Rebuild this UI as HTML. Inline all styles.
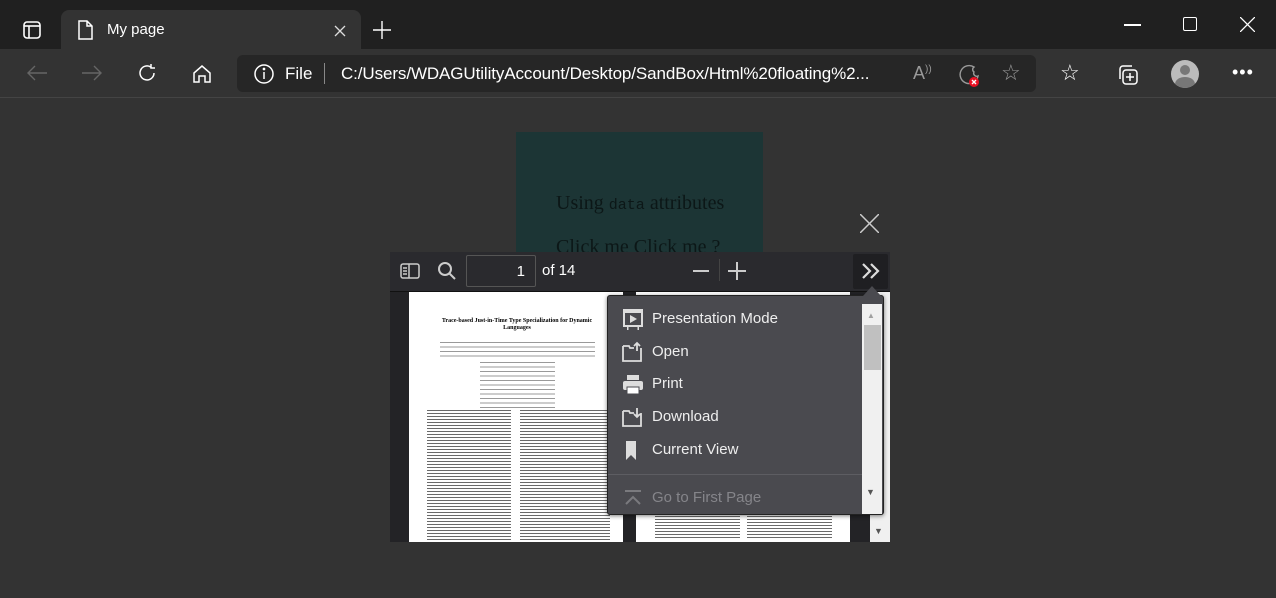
<!DOCTYPE html>
<html><head><style>
*{margin:0;padding:0;box-sizing:border-box}
body{width:1276px;height:598px;background:#333;font-family:"Liberation Sans",sans-serif;position:relative;overflow:hidden}
.abs{position:absolute}
.lines{background:repeating-linear-gradient(to bottom,#6a6a6a 0 1px,#fff 1px 3px)}
.lines2{background:repeating-linear-gradient(to bottom,#999 0 1px,#fff 1px 4.5px)}
</style></head><body>
<div class="abs" style="left:0;top:0;width:1276px;height:49px;background:#202020"></div>
<div class="abs" style="left:61px;top:10px;width:300px;height:40px;background:#333;border-radius:8px 8px 0 0"></div>
<svg class="abs" style="left:22px;top:20px" width="20" height="20" viewBox="0 0 20 20" fill="none" stroke="#fff" stroke-width="1.6"><rect x="2" y="2" width="16" height="16" rx="3"/><line x1="2" y1="6" x2="18" y2="6"/><line x1="7" y1="6" x2="7" y2="18"/></svg>
<svg class="abs" style="left:76px;top:19px" width="18" height="22" viewBox="0 0 18 22" fill="none" stroke="#fff" stroke-width="1.5"><path d="M3 2h8l5 5v13H3z M11 2v5h5"/></svg>
<div class="abs" style="left:107px;top:21px;color:#fff;font-size:15px">My page</div>
<svg class="abs" style="left:334px;top:25px" width="12" height="12" viewBox="0 0 12 12" stroke="#ddd" stroke-width="1.3"><path d="M1 1l10 10M11 1L1 11"/></svg>
<svg class="abs" style="left:373px;top:21px" width="18" height="18" viewBox="0 0 18 18" stroke="#fff" stroke-width="1.4"><path d="M9 0v18M0 9h18"/></svg>
<div class="abs" style="left:1124px;top:24px;width:17px;height:1.5px;background:#fff"></div>
<div class="abs" style="left:1183px;top:17px;width:14px;height:14px;border:1.3px solid #fff;border-radius:2px"></div>
<svg class="abs" style="left:1240px;top:17px" width="15" height="15" viewBox="0 0 15 15" stroke="#fff" stroke-width="1.3"><path d="M0 0l15 15M15 0L0 15"/></svg>
<div class="abs" style="left:0;top:49px;width:1276px;height:49px;background:#333;border-bottom:1px solid #444"></div>
<svg class="abs" style="left:26px;top:64px" width="22" height="18" viewBox="0 0 22 18" fill="none" stroke="#666" stroke-width="1.4"><path d="M21 9H2M9 2L2 9l7 7"/></svg>
<svg class="abs" style="left:81px;top:64px" width="22" height="18" viewBox="0 0 22 18" fill="none" stroke="#666" stroke-width="1.4"><path d="M1 9h19M13 2l7 7-7 7"/></svg>
<svg class="abs" style="left:136px;top:62px" width="22" height="22" viewBox="0 0 22 22" fill="none" stroke="#fff" stroke-width="1.5"><path d="M18 11a7 7 0 1 1-3-5.8M15 2v4h4"/></svg>
<svg class="abs" style="left:191px;top:63px" width="22" height="22" viewBox="0 0 22 22" fill="none" stroke="#fff" stroke-width="1.5"><path d="M3 10l8-7 8 7v9h-5v-6h-6v6H3z"/></svg>
<div class="abs" style="left:237px;top:55px;width:799px;height:37px;background:#262626;border-radius:6px"></div>
<svg class="abs" style="left:253px;top:63px" width="22" height="22" viewBox="0 0 22 22" fill="none" stroke="#fff" stroke-width="1.5"><circle cx="11" cy="11" r="9"/><line x1="11" y1="9" x2="11" y2="16"/><circle cx="11" cy="6" r=".6" fill="#fff"/></svg>
<div class="abs" style="left:285px;top:64px;color:#fff;font-size:17px">File</div>
<div class="abs" style="left:324px;top:63px;width:1px;height:21px;background:#888"></div>
<div class="abs" style="left:341px;top:64px;color:#fff;font-size:17px;letter-spacing:-0.1px">C:/Users/WDAGUtilityAccount/Desktop/SandBox/Html%20floating%2...</div>
<div class="abs" style="left:913px;top:63px;color:#999;font-size:18px">A<sup style="font-size:10px">))</sup></div>
<svg class="abs" style="left:956px;top:63px" width="26" height="26" viewBox="0 0 26 26" fill="none" stroke="#999" stroke-width="1.4"><path d="M18 4a9 9 0 1 0 4 9 3 3 0 0 1-4-4 3 3 0 0 1 0-5z"/><circle cx="18" cy="19" r="5" fill="#e81123" stroke="none"/><path d="M16 17l4 4M20 17l-4 4" stroke="#fff"/></svg>
<div class="abs" style="left:1001px;top:60px;color:#999;font-size:22px">☆</div>
<div class="abs" style="left:1060px;top:60px;color:#fff;font-size:22px">☆</div>
<svg class="abs" style="left:1116px;top:63px" width="24" height="24" viewBox="0 0 24 24" fill="none" stroke="#fff" stroke-width="1.5"><rect x="7" y="7" width="14" height="14" rx="3"/><path d="M4 16V6a3 3 0 0 1 3-3h9M14 10v8M10 14h8"/></svg>
<div class="abs" style="left:1171px;top:60px;width:28px;height:28px;border-radius:50%;background:#bbb;overflow:hidden"><div class="abs" style="left:9px;top:5px;width:10px;height:10px;border-radius:50%;background:#777"></div><div class="abs" style="left:4px;top:17px;width:20px;height:14px;border-radius:50%;background:#777"></div></div>
<div class="abs" style="left:1232px;top:62px;color:#fff;font-size:18px;letter-spacing:1px">•••</div>
<div class="abs" style="left:516px;top:132px;width:247px;height:120px;background:#1c3535"></div>
<div class="abs" style="left:556px;top:192px;color:#0c1717;font-family:'Liberation Serif',serif;font-size:20px">Using <span style="font-family:'Liberation Mono',monospace;font-size:15px">data</span> attributes</div>
<div class="abs" style="left:556px;top:236px;color:#0c1717;font-family:'Liberation Serif',serif;font-size:20px;height:16px;overflow:hidden">Click me Click me ?</div>
<svg class="abs" style="left:860px;top:214px" width="19" height="19" viewBox="0 0 19 19" stroke="#ccc" stroke-width="1.5"><path d="M0 0l19 19M19 0L0 19"/></svg>
<div class="abs" style="left:390px;top:252px;width:500px;height:40px;background:#2a2a2e;border-bottom:1px solid #111"></div>
<svg class="abs" style="left:399px;top:261px" width="22" height="20" viewBox="0 0 22 20" fill="none" stroke="#ccc" stroke-width="1.5"><rect x="2" y="3" width="18" height="14" rx="2"/><line x1="10" y1="3" x2="10" y2="17"/><path d="M4 7h4M4 10h4M4 13h4"/></svg>
<svg class="abs" style="left:436px;top:260px" width="22" height="22" viewBox="0 0 22 22" fill="none" stroke="#ccc" stroke-width="2"><circle cx="9" cy="9" r="6"/><line x1="13" y1="13" x2="19" y2="19"/></svg>
<div class="abs" style="left:466px;top:255px;width:70px;height:32px;border:1px solid #555;border-radius:2px;background:#2a2a2e;color:#fff;font-size:15px;text-align:right;padding:7px 10px">1</div>
<div class="abs" style="left:542px;top:262px;color:#fff;font-size:15px">of 14</div>
<div class="abs" style="left:693px;top:270px;width:16px;height:2px;background:#ccc"></div>
<div class="abs" style="left:719px;top:259px;width:1px;height:22px;background:#444"></div>
<div class="abs" style="left:728px;top:270px;width:18px;height:2px;background:#ccc"></div>
<div class="abs" style="left:736px;top:262px;width:2px;height:18px;background:#ccc"></div>
<div class="abs" style="left:853px;top:254px;width:35px;height:35px;background:#1f1f22;border-radius:2px"></div>
<svg class="abs" style="left:860px;top:262px" width="22" height="18" viewBox="0 0 22 18" fill="none" stroke="#ddd" stroke-width="2.2"><path d="M3 2l7 7-7 7M11 2l7 7-7 7"/></svg>
<div class="abs" style="left:390px;top:292px;width:500px;height:250px;background:#232326"></div>
<div class="abs" style="left:409px;top:292px;width:214px;height:250px;background:#fff"></div>
<div class="abs" style="left:437px;top:318px;width:160px;color:#000;font-family:'Liberation Serif',serif;font-size:6px;font-weight:bold;text-align:center;line-height:7px">Trace-based Just-in-Time Type Specialization for Dynamic Languages</div>
<div class="abs lines2" style="left:440px;top:342px;width:155px;height:18px"></div>
<div class="abs lines2" style="left:480px;top:362px;width:75px;height:46px"></div>
<div class="abs lines" style="left:427px;top:410px;width:84px;height:130px"></div>
<div class="abs lines" style="left:520px;top:410px;width:90px;height:130px"></div>
<div class="abs" style="left:636px;top:292px;width:214px;height:250px;background:#fff"></div>
<div class="abs lines" style="left:655px;top:516px;width:85px;height:24px"></div>
<div class="abs lines" style="left:747px;top:516px;width:85px;height:24px"></div>
<div class="abs" style="left:870px;top:292px;width:20px;height:250px;background:#f0f0f0"></div>
<div class="abs" style="left:874px;top:526px;color:#555;font-size:9px">▼</div>
<div class="abs" style="left:607px;top:295px;width:277px;height:220px;background:#4a4a4f;border:1px solid #222;border-radius:3px;box-shadow:0 1px 4px rgba(0,0,0,.5)"></div>
<div class="abs" style="left:863px;top:286px;width:0;height:0;border-left:9px solid transparent;border-right:9px solid transparent;border-bottom:10px solid #4a4a4f"></div>
<div class="abs" style="left:862px;top:304px;width:20px;height:210px;background:#f0f0f0"></div>
<div class="abs" style="left:864px;top:325px;width:17px;height:45px;background:#c0c0c0"></div>
<div class="abs" style="left:867px;top:311px;color:#a0a0a0;font-size:8px">▲</div>
<div class="abs" style="left:866px;top:487px;color:#555;font-size:9px">▼</div>
<div class="abs" style="left:608px;top:474px;width:254px;height:1px;background:#5d5d62"></div>
<svg class="abs" style="left:622px;top:308px" width="22" height="24" viewBox="0 0 22 24" fill="#ddd"><rect x="1" y="1" width="20" height="2"/><rect x="2" y="4" width="18" height="14" fill="none" stroke="#ddd" stroke-width="2"/><path d="M8 7l7 4-7 4z"/><rect x="5" y="19" width="1.5" height="3"/><rect x="15.5" y="19" width="1.5" height="3"/></svg>
<svg class="abs" style="left:622px;top:341px" width="22" height="21" viewBox="0 0 22 21" fill="none" stroke="#ddd" stroke-width="1.8"><path d="M1 5h6l1 2h4M19 7v13H1V5M15 10V2M12 5l3-3 3 3"/></svg>
<svg class="abs" style="left:622px;top:374px" width="22" height="21" viewBox="0 0 22 21" fill="#ddd"><rect x="5" y="1" width="12" height="5"/><rect x="1" y="7" width="20" height="9" rx="2"/><rect x="5" y="13" width="12" height="7" fill="#fff" stroke="#4a4a4f"/></svg>
<svg class="abs" style="left:622px;top:406px" width="22" height="21" viewBox="0 0 22 21" fill="none" stroke="#ddd" stroke-width="1.8"><path d="M1 5h6l1 2h4M19 7v13H1V5M15 2v9M12 8l3 3 3-3"/></svg>
<svg class="abs" style="left:624px;top:440px" width="14" height="21" viewBox="0 0 14 21" fill="#ddd"><path d="M2 1h10v19l-5-5-5 5z"/></svg>
<svg class="abs" style="left:622px;top:489px" width="22" height="18" viewBox="0 0 22 18" fill="none" stroke="#7a7a7e" stroke-width="2"><path d="M3 2h16M4 15l7-7 7 7"/></svg>
<div class="abs" style="left:652px;top:310px;color:#eee;font-size:15px">Presentation Mode</div>
<div class="abs" style="left:652px;top:343px;color:#eee;font-size:15px">Open</div>
<div class="abs" style="left:652px;top:375px;color:#eee;font-size:15px">Print</div>
<div class="abs" style="left:652px;top:408px;color:#eee;font-size:15px">Download</div>
<div class="abs" style="left:652px;top:441px;color:#eee;font-size:15px">Current View</div>
<div class="abs" style="left:652px;top:489px;color:#85858a;font-size:15px">Go to First Page</div>
</body></html>
